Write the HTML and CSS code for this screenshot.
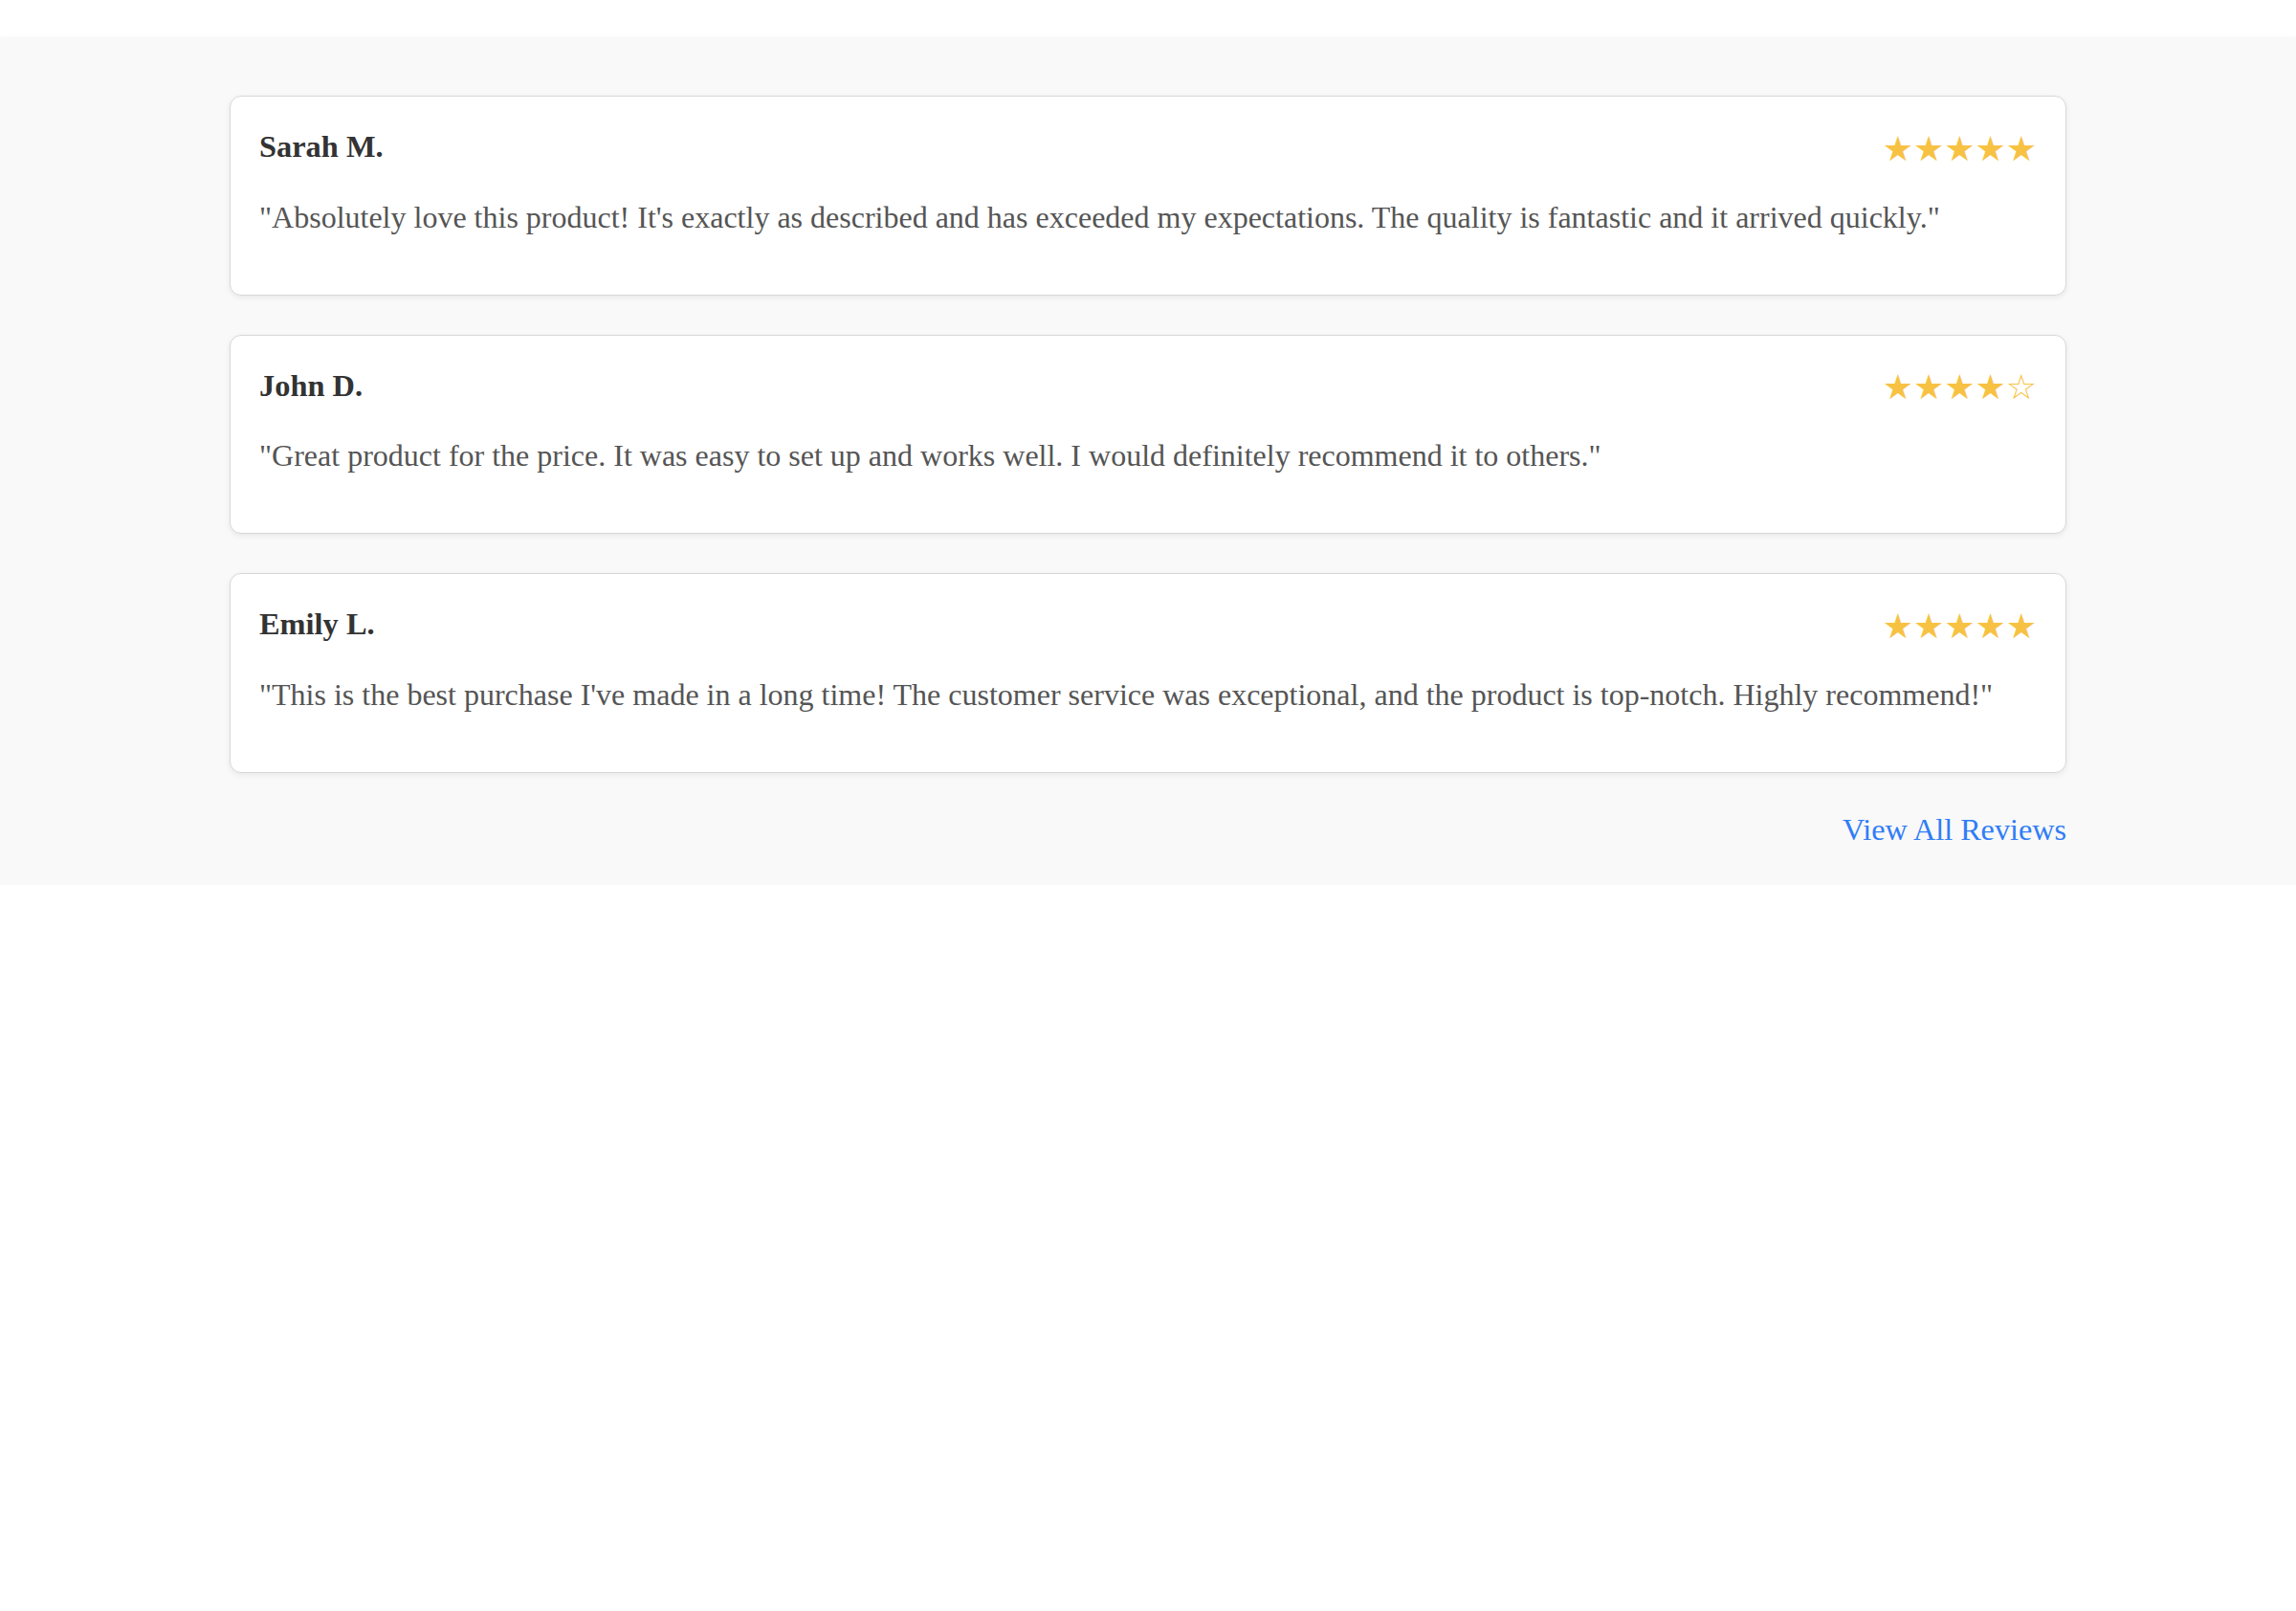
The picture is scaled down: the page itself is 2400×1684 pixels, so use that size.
FILE: index.html
```html
<!DOCTYPE html>
<html lang="en">
<head>
<meta charset="utf-8">
<title>Reviews</title>
<link rel="stylesheet" href="styles.css">
</head>
<body>
<section class="reviews">
  <div class="review-list">
    <div class="review-card">
      <div class="review-header">
        <h3 class="reviewer">Sarah M.</h3>
        <div class="stars">★★★★★</div>
      </div>
      <p class="review-text">"Absolutely love this product! It's exactly as described and has exceeded my expectations. The quality is fantastic and it arrived quickly."</p>
    </div>
    <div class="review-card">
      <div class="review-header">
        <h3 class="reviewer">John D.</h3>
        <div class="stars">★★★★☆</div>
      </div>
      <p class="review-text">"Great product for the price. It was easy to set up and works well. I would definitely recommend it to others."</p>
    </div>
    <div class="review-card">
      <div class="review-header">
        <h3 class="reviewer">Emily L.</h3>
        <div class="stars">★★★★★</div>
      </div>
      <p class="review-text">"This is the best purchase I've made in a long time! The customer service was exceptional, and the product is top-notch. Highly recommend!"</p>
    </div>
  </div>
  <div class="view-all-row">
    <a class="view-all" href="#">View All Reviews</a>
  </div>
</section>
</body>
</html>
```
FILE: styles.css
```css
html, body {
  margin: 0;
  padding: 0;
  background: #ffffff;
  font-family: "Liberation Serif", "Times New Roman", serif;
  line-height: 1.6;
}

.reviews {
  margin-top: 39px;
  background: #f9f9f9;
  padding: 61px 240px 32px;
  box-shadow: 0 4px 8px rgba(0, 0, 0, 0.12);
}

.review-list {
  display: flex;
  flex-direction: column;
  gap: 41px;
}

.review-card {
  background: #ffffff;
  border: 1.5px solid #d8d8d8;
  border-radius: 12px;
  padding: 27px 30px 30px;
  box-shadow: 0 2px 6px rgba(0, 0, 0, 0.07);
}

.review-header {
  display: flex;
  justify-content: space-between;
  align-items: center;
  margin-bottom: 22px;
}

.reviewer {
  margin: 0;
  font-size: 32.4px;
  font-weight: bold;
  color: #333333;
}

.stars {
  color: #f7c244;
  font-size: 36px;
  font-family: "DejaVu Sans", sans-serif;
  line-height: 1;
  padding-top: 4px;
}

.review-text {
  margin: 0 0 24.5px;
  font-size: 32px;
  color: #555555;
}

.view-all-row {
  display: flex;
  justify-content: flex-end;
  margin-top: 34px;
}

.view-all {
  font-size: 32.2px;
  color: #307df6;
  text-decoration: none;
}
```
